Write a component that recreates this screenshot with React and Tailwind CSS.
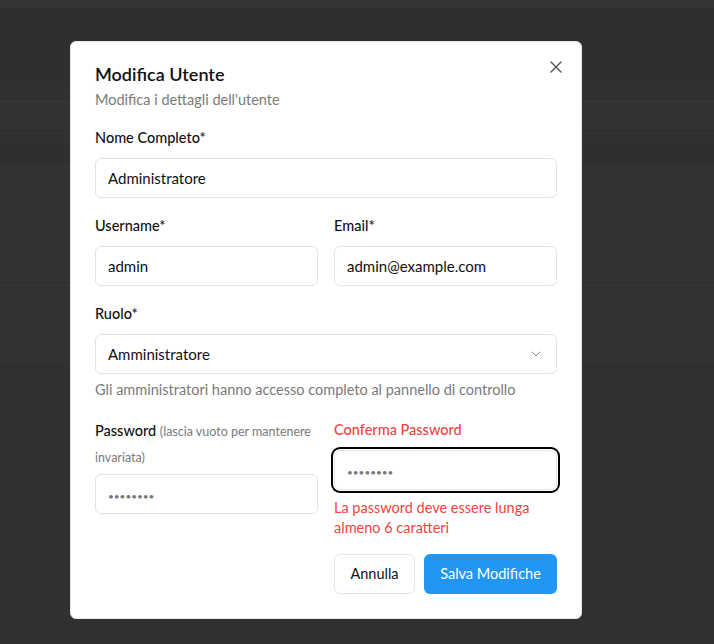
import { X, ChevronDown } from 'lucide-react';

const inputCls =
  'w-full h-10 rounded-md border border-[#e4e4e4] bg-white px-3 text-[15px] text-[#111] placeholder-[#777] placeholder:text-[10px] focus:outline-none';

export default function App() {
  return (
    <div className="relative w-[714px] h-[644px] overflow-hidden bg-[#303030] font-['Lato',sans-serif]">
      {/* page behind the overlay */}
      <div className="flex flex-col">
        <div className="h-2 bg-[#343434]" />
        <div className="h-[79px] bg-[#2f2f2f]" />
        <div className="h-3 bg-[#313131] border-b border-[#2c2c2c]" />
        <div className="h-[32px] bg-[#333333] border-b border-[#2d2d2d]" />
        <div className="h-[14px] bg-[#313131] border-b border-[#2d2d2d]" />
        <div className="h-[19px] bg-[#2f2f2f]" />
        <div className="h-[119px] bg-[#333333] border-b border-[#2c2c2c]" />
        <div className="h-[79px] bg-[#333333]" />
        <div className="flex-1 h-[282px] bg-[#2f2f2f]" />
      </div>

      {/* Modal */}
      <div className="absolute left-[70px] top-[41px] w-[512px] bg-white rounded-md border border-[#e5e5e5] px-6 pt-5 pb-6 text-[#111]">
        <button className="absolute right-[15px] top-[15px] text-[#555]">
          <X className="w-5 h-5" strokeWidth={1.6} />
        </button>

        <h2 className="text-lg leading-6 font-semibold">Modifica Utente</h2>
        <p className="mt-1 text-[14.5px] leading-5 text-[#7a7a7a]">Modifica i dettagli dell'utente</p>

        <div className="mt-4 space-y-4">
          <div>
            <label className="block text-[14.5px] leading-6 font-medium mb-2">Nome Completo*</label>
            <input className={inputCls} defaultValue="Administratore" />
          </div>

          <div className="grid grid-cols-2 gap-4">
            <div>
              <label className="block text-[14.5px] leading-6 font-medium mb-2">Username*</label>
              <input className={inputCls} defaultValue="admin" />
            </div>
            <div>
              <label className="block text-[14.5px] leading-6 font-medium mb-2">Email*</label>
              <input className={inputCls} defaultValue="admin@example.com" />
            </div>
          </div>

          <div>
            <label className="block text-[14.5px] leading-6 font-medium mb-2">Ruolo*</label>
            <div className="flex items-center justify-between h-10 rounded-md border border-[#e4e4e4] px-3 text-[15px]">
              <span>Amministratore</span>
              <ChevronDown className="w-4 h-4 text-[#888]" strokeWidth={1.5} />
            </div>
            <p className="mt-1 text-[14.5px] leading-6 text-[#7a7a7a]">
              Gli amministratori hanno accesso completo al pannello di controllo
            </p>
          </div>

          <div className="grid grid-cols-2 gap-4 items-start">
            <div>
              <label className="block text-[14.5px] leading-[25px] font-medium mb-[4px]">
                Password <span className="text-[12.5px] font-normal text-[#7a7a7a]">(lascia vuoto per mantenere invariata)</span>
              </label>
              <input type="password" className={inputCls} placeholder="••••••••" />
            </div>
            <div>
              <label className="block text-[14.5px] leading-6 font-medium text-[#ef4444] mb-2">Conferma Password</label>
              <input
                type="password"
                className={`${inputCls} ring-2 ring-black ring-offset-1`}
                placeholder="••••••••"
              />
              <p className="mt-2 text-[14.5px] leading-5 text-[#ef4444]">
                La password deve essere lunga almeno 6 caratteri
              </p>
            </div>
          </div>

          <div className="flex justify-end gap-[9px]">
            <button className="h-10 w-[81px] rounded-md border border-[#e4e4e4] bg-white text-[14.5px] text-[#111]">
              Annulla
            </button>
            <button className="h-10 w-[133px] rounded-md bg-[#2196f3] text-[14.5px] text-white">
              Salva Modifiche
            </button>
          </div>
        </div>
      </div>
    </div>
  );
}
